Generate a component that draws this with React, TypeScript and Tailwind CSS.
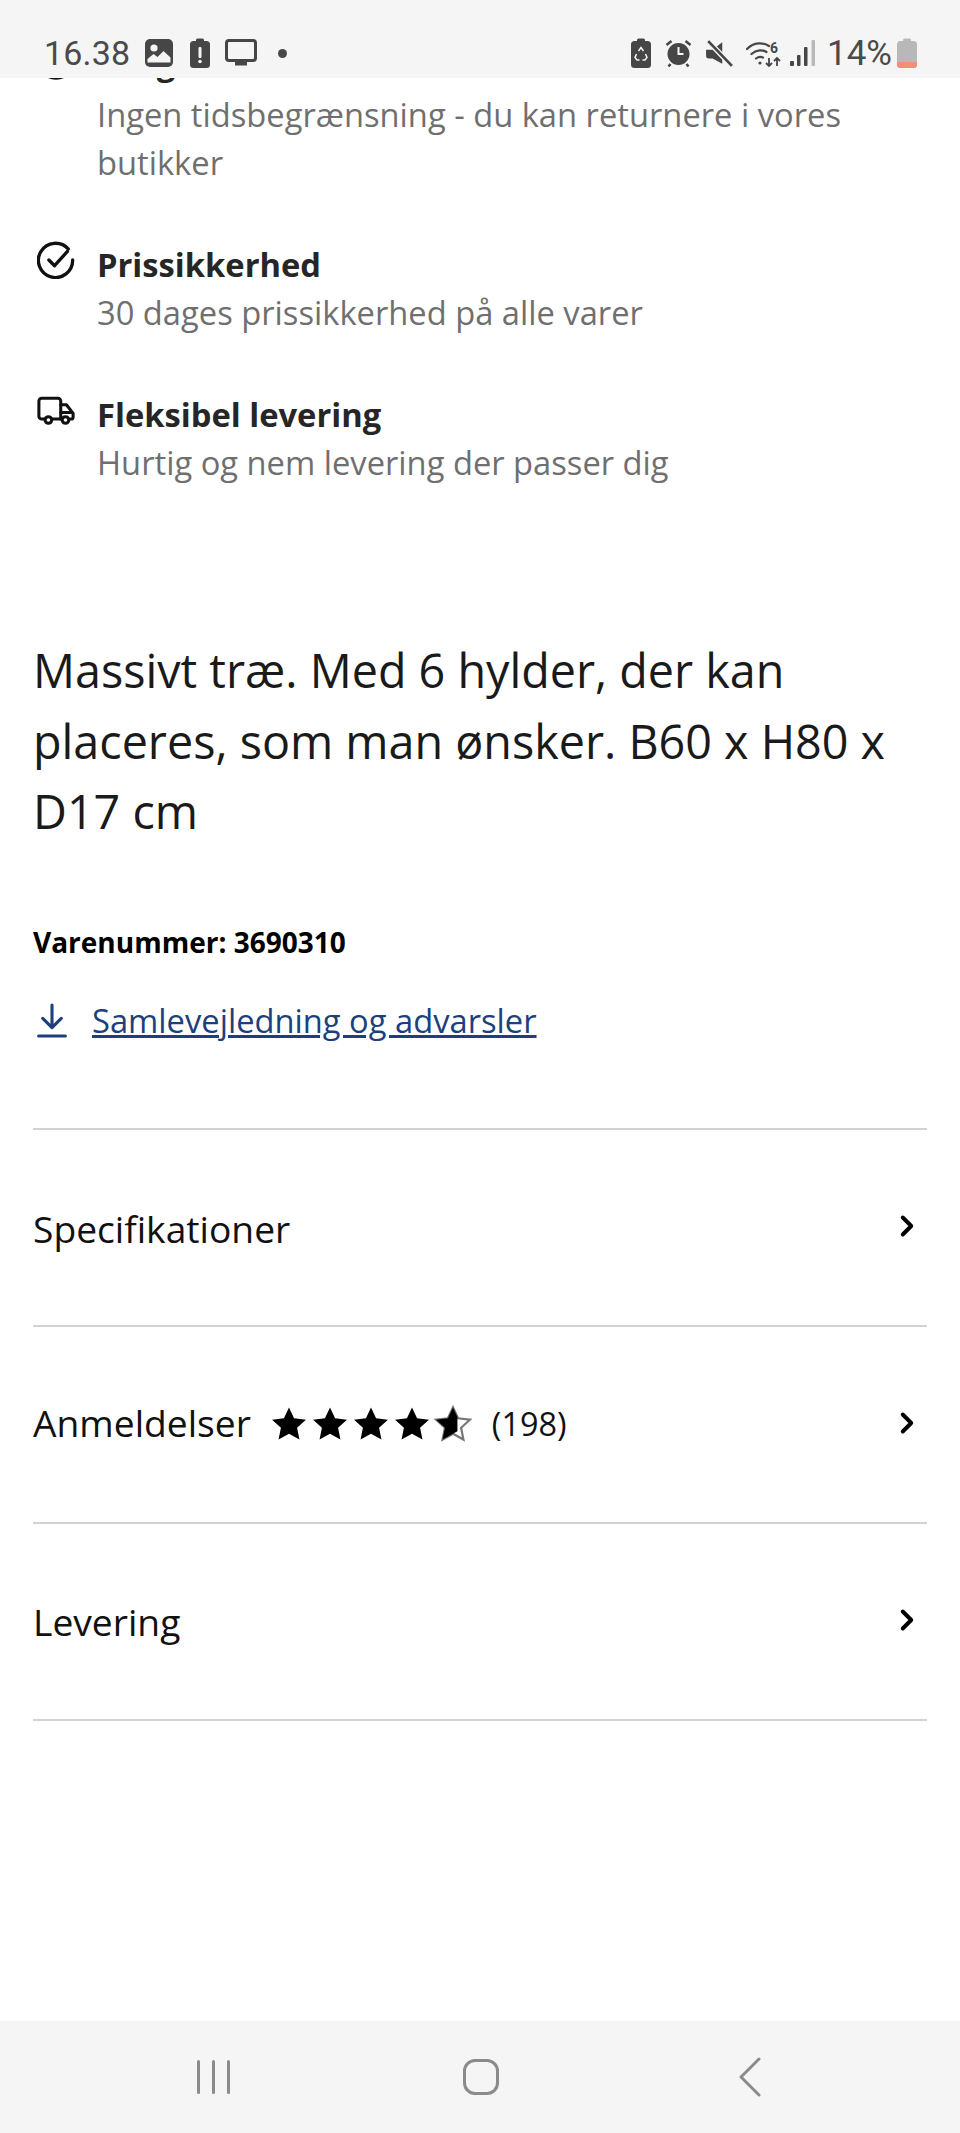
import { ChevronRight } from "lucide-react";
import type { ReactNode } from "react";

const STAR = "M12 1.500l3.200 6.900 7.500.9-5.600 5.100 1.500 7.400L12 18.100l-6.600 3.700 1.500-7.400L1.300 9.300l7.500-.9z";

function StatusLeft() {
  return (
    <div className="flex items-center">
      <span className="text-[34px] leading-none tracking-[0.2px] text-[#4a4a4a] font-['Roboto',sans-serif] w-[101px]">16.38</span>
      <svg width="28" height="28" viewBox="0 0 28 28">
        <rect x="0" y="0" width="28" height="28" rx="5" fill="#464646" />
        <circle cx="9" cy="9" r="3.600" fill="#f5f5f5" />
        <path d="M2.500 23.500v-3.500l6-5 4 3 6-6 7 6.500v5z" fill="#f5f5f5" />
      </svg>
      <svg width="20" height="30" viewBox="0 0 20 30" className="ml-[17px]">
        <path d="M6 3V2a1.500 1.500 0 0 1 1.500-1.500h5A1.500 1.500 0 0 1 14 2v1h2.500A3.500 3.500 0 0 1 20 6.500V26.500A3.500 3.500 0 0 1 16.500 30h-13A3.500 3.500 0 0 1 0 26.500V6.500A3.500 3.500 0 0 1 3.500 3z" fill="#464646" />
        <rect x="8.500" y="9" width="3" height="11" rx="1" fill="#f5f5f5" />
        <circle cx="10" cy="23.500" r="1.800" fill="#f5f5f5" />
      </svg>
      <svg width="32" height="28" viewBox="0 0 32 28" className="ml-[15px]">
        <rect x="1.500" y="1.500" width="29" height="20" rx="2.500" fill="none" stroke="#464646" strokeWidth="3" />
        <rect x="10" y="23" width="12" height="3.500" fill="#464646" />
      </svg>
      <span className="ml-[21px] w-[9px] h-[9px] rounded-full bg-[#484848]" />
    </div>
  );
}

function StatusRight() {
  return (
    <div className="flex items-center">
      <svg width="20" height="30" viewBox="0 0 20 30">
        <path d="M6 3V2a1.500 1.500 0 0 1 1.500-1.500h5A1.500 1.500 0 0 1 14 2v1h2.500A3.500 3.500 0 0 1 20 6.500V26.500A3.500 3.500 0 0 1 16.500 30h-13A3.500 3.500 0 0 1 0 26.500V6.500A3.500 3.500 0 0 1 3.500 3z" fill="#464646" />
        <path d="M7.500 13l2.500-3.500 2.500 3.500M14.500 16l1.500 3.500-2 2.500h-2.500M5.500 16l-1.500 3.500 2 2.500h2.500" fill="none" stroke="#f5f5f5" strokeWidth="1.500" />
      </svg>
      <svg width="27" height="28" viewBox="0 0 26 28" className="ml-[14px]">
        <circle cx="13" cy="15" r="11" fill="#464646" />
        <path d="M13 8v7h5" fill="none" stroke="#f5f5f5" strokeWidth="2" />
        <path d="M1 6l5-4M25 6l-5-4M5 25l-2 2.500M21 25l2 2.500" fill="none" stroke="#464646" strokeWidth="2.500" />
      </svg>
      <svg width="28" height="28" viewBox="0 0 26 26" className="ml-[13px]">
        <path d="M1 10h6l9-7v20l-9-5H3a2 2 0 0 1-2-2z" fill="#464646" />
        <path d="M2 1l23 24" stroke="#f5f5f5" strokeWidth="5" />
        <path d="M3 2l22 23" stroke="#464646" strokeWidth="2.500" />
      </svg>
      <svg width="36" height="28" viewBox="0 0 36 28" className="ml-[13px]">
        <path d="M1 10c7-7 16-7 22-3M5.500 15c5-4.500 11-4.500 15-2M10 19.500c2.500-2 5-2 7-1" fill="none" stroke="#464646" strokeWidth="2.200" strokeLinecap="round" />
        <circle cx="14" cy="24" r="1.600" fill="#464646" />
        <path d="M23 19v8M20 24l3 3 3-3M31 27v-8M28 22l3-3 3 3" fill="none" stroke="#464646" strokeWidth="1.800" />
        <text x="24" y="14" fontSize="14" fontWeight="700" fill="#464646" fontFamily="Roboto, sans-serif">6</text>
      </svg>
      <svg width="26" height="26" viewBox="0 0 26 26" className="ml-[8px]">
        <rect x="0" y="21" width="4" height="5" rx="1" fill="#464646" />
        <rect x="7" y="15" width="3.500" height="11" rx="1" fill="#464646" />
        <rect x="14" y="7" width="3.500" height="19" rx="1" fill="#464646" />
        <rect x="21.500" y="0" width="3.500" height="26" rx="1" fill="#b9b9b9" />
      </svg>
      <span className="ml-[11px] text-[35px] leading-none text-[#4a4a4a] font-['Roboto',sans-serif]">14%</span>
      <svg width="20" height="30" viewBox="0 0 20 30" className="ml-[5px]">
        <path d="M6 3V2a1.500 1.500 0 0 1 1.500-1.500h5A1.500 1.500 0 0 1 14 2v1h2.500A3.500 3.500 0 0 1 20 6.500V26.500A3.500 3.500 0 0 1 16.500 30h-13A3.500 3.500 0 0 1 0 26.500V6.500A3.500 3.500 0 0 1 3.500 3z" fill="#b8b8b8" />
        <path d="M0 24h20v2.500A3.500 3.500 0 0 1 16.500 30h-13A3.500 3.500 0 0 1 0 26.500z" fill="#f28f76" />
      </svg>
    </div>
  );
}

function Usp({ icon, title, text, titleClass = "" }: { icon: ReactNode; title: string; text: ReactNode; titleClass?: string }) {
  return (
    <div className="flex">
      <div className="w-[64px] pl-[4px] shrink-0">{icon}</div>
      <div className="pt-[1px]">
        <div className={`text-[32.700px] leading-[48px] font-bold text-[#262626] ${titleClass}`}>{title}</div>
        <div className="text-[32.700px] leading-[48px] text-[#6f6f6f]">{text}</div>
      </div>
    </div>
  );
}

function Row({ children }: { children: ReactNode }) {
  return (
    <div className="h-[197px] border-b-2 border-[#d2d2d2] flex items-center justify-between pr-[3px]">
      {children}
      <ChevronRight size={34} strokeWidth={2.750} className="text-black -mt-[3px]" />
    </div>
  );
}

export default function App() {
  return (
    <div className="w-[960px] h-[2133px] bg-white flex flex-col overflow-hidden font-['Open_Sans',sans-serif]">
      <div className="h-[78px] shrink-0 bg-[#f5f5f5] flex items-center justify-between pl-[44px] pr-[43px] pt-[28px]">
        <StatusLeft />
        <StatusRight />
      </div>

      <main className="flex-1 overflow-hidden px-[33px]">
        <div className="-mt-[40px] flex flex-col gap-[53px]">
          <Usp
            title="Lang returret"
            titleClass="mb-[4px]"
            text={
              <>
                Ingen tidsbegrænsning - du kan returnere i vores
                <br />
                butikker
              </>
            }
            icon={
              <svg width="38" height="38" viewBox="0 0 38 38" fill="none" stroke="#111" strokeWidth="3.500" strokeLinecap="round" className="mt-[4px]">
                <circle cx="19" cy="19" r="17" />
              </svg>
            }
          />
          <Usp
            title="Prissikkerhed"
            text="30 dages prissikkerhed på alle varer"
            icon={
              <svg width="38" height="38" viewBox="0 0 40 40" fill="none" stroke="#111" strokeWidth="3.500" strokeLinecap="round" strokeLinejoin="round" className="mt-[1px]">
                <path d="M33 8.500A18 18 0 1 0 37.500 20" />
                <path d="M12.500 20l6 6L32 11" />
              </svg>
            }
          />
          <Usp
            title="Fleksibel levering"
            text="Hurtig og nem levering der passer dig"
            icon={
              <svg width="38" height="29" viewBox="0 0 40 30" fill="none" stroke="#111" strokeWidth="3.200" strokeLinejoin="round" strokeLinecap="round" className="mt-[6px]">
                <path d="M8 24H5a3 3 0 0 1-3-3V5a3 3 0 0 1 3-3h17a3 3 0 0 1 3 3v19H16" />
                <path d="M25 9h6l7 9v4a2 2 0 0 1-2 2h-1M25 24h1M25 17h12" />
                <circle cx="12" cy="25" r="3.500" />
                <circle cx="30" cy="25" r="3.500" />
              </svg>
            }
          />
        </div>

        <p className="mt-[148px] text-[46.700px] leading-[70.500px] text-[#1a1a1a]">
          Massivt træ. Med 6 hylder, der kan placeres, som man ønsker. B60 x H80 x D17 cm
        </p>

        <div className="mt-[75px] text-[28px] leading-[40px] font-bold text-black">Varenummer: 3690310</div>

        <div className="mt-[37px] flex items-center">
          <svg width="32" height="35" viewBox="0 0 30 34" fill="none" stroke="#1d3f7d" strokeWidth="3" strokeLinecap="round" strokeLinejoin="round" className="ml-[3px]">
            <path d="M15 2v21M6 15l9 9 9-9" />
            <path d="M2 32h26" />
          </svg>
          <a href="#" className="ml-[24px] text-[32.700px] leading-[44px] text-[#1d3f7d] underline">Samlevejledning og advarsler</a>
        </div>

        <div className="mt-[85px] border-t-2 border-[#d2d2d2]">
          <Row>
            <span className="mt-[3px] text-[37.200px] text-[#111]">Specifikationer</span>
          </Row>
          <Row>
            <div className="flex items-center">
              <span className="-mt-[2px] text-[37.200px] text-[#111]">Anmeldelser</span>
              <div className="ml-[19px] flex gap-[3px]">
                {[0, 1, 2, 3].map((i) => (
                  <svg key={i} width="38" height="38" viewBox="0 0 24 24">
                    <path d={STAR} fill="#000" />
                  </svg>
                ))}
                <svg width="38" height="38" viewBox="0 0 24 24">
                  <path d={STAR} fill="#fff" stroke="#777" strokeWidth="1.400" />
                  <path d="M12 1.500L14.800 7.600V16.600L12 18.100l-6.600 3.700 1.500-7.400L1.300 9.300l7.500-.9z" fill="#000" />
                </svg>
              </div>
              <span className="-mt-[2px] ml-[20px] text-[32.400px] text-[#111]">(198)</span>
            </div>
          </Row>
          <Row>
            <span className="mt-[1px] text-[37.200px] text-[#111]">Levering</span>
          </Row>
        </div>
      </main>

      <div className="h-[112px] shrink-0 bg-[#f5f5f5] flex items-center pl-[197px]">
        <div className="flex gap-[12px]">
          <span className="w-[3px] h-[34px] rounded-full bg-[#8b8b8b]" />
          <span className="w-[3px] h-[34px] rounded-full bg-[#8b8b8b]" />
          <span className="w-[3px] h-[34px] rounded-full bg-[#8b8b8b]" />
        </div>
        <div className="ml-[233px] w-[36px] h-[36px] rounded-[12px] border-[3px] border-[#8b8b8b]" />
        <svg width="22" height="40" viewBox="0 0 22 40" fill="none" stroke="#8b8b8b" strokeWidth="3" strokeLinecap="round" strokeLinejoin="round" className="ml-[240px]">
          <path d="M20 2L2 20l18 18" />
        </svg>
      </div>
    </div>
  );
}
